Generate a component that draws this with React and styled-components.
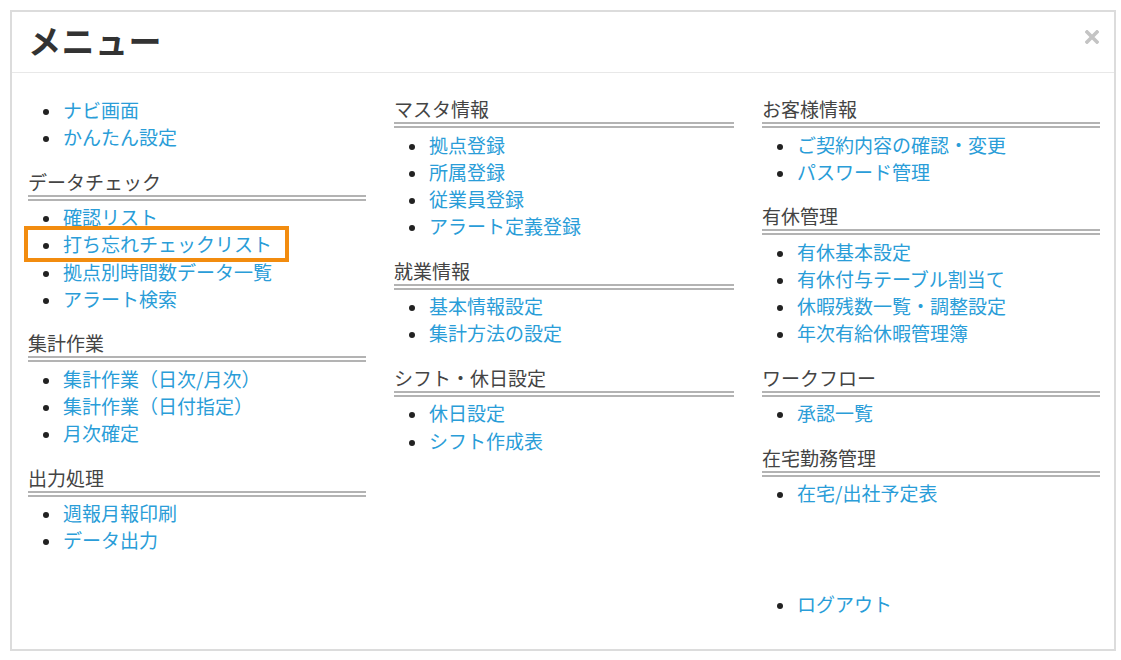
import React from "react";
import styled, { createGlobalStyle } from "styled-components";

const Global = createGlobalStyle`
  html, body { margin: 0; padding: 0; background: #ffffff; }
  body { font-family: "Noto Sans CJK JP", "Noto Sans", sans-serif; }
  *, *::before, *::after { box-sizing: border-box; }
`;

const Page = styled.div`
  padding: 10px 5px 0 10px;
  width: 1121px;
  height: 660px;
`;

const Modal = styled.div`
  width: 1106px;
  height: 641px;
  border: 2px solid #dcdcdc;
  background: #fff;
  display: flex;
  flex-direction: column;
`;

const Header = styled.div`
  display: flex;
  justify-content: space-between;
  align-items: flex-start;
  padding: 8px 15px 12px 16px;
  border-bottom: 1px solid #e8e8e8;
`;

const Title = styled.h1`
  margin: 0;
  font-size: 33px;
  line-height: 40px;
  font-weight: 700;
  color: #333;
  letter-spacing: 0.5px;
`;

const Close = styled.button`
  border: 0;
  background: none;
  padding: 0;
  margin-top: 10px;
  width: 14px;
  height: 14px;
  display: flex;
  cursor: pointer;
`;

const Body = styled.div`
  display: grid;
  grid-template-columns: 338px 340px 338px;
  column-gap: 28px;
  padding: 23px 14px 0 16px;
  align-items: start;
`;

const Column = styled.div`
  display: flex;
  flex-direction: column;
  gap: 18px;
`;

const Section = styled.section`
  display: flex;
  flex-direction: column;
  margin-top: ${(p) => p.$offset || 0}px;
`;

const Heading = styled.h2`
  margin: 0;
  font-size: 19px;
  line-height: 26px;
  font-weight: 400;
  color: #444;
  border-bottom: 6px double #b3b3b3;
`;

const List = styled.ul`
  list-style: none;
  margin: 0;
  padding: ${(p) => (p.$plain ? 0 : "2.5px")} 0 0 0;
`;

const Item = styled.li`
  position: relative;
  padding-left: 35px;
  font-size: 19px;
  line-height: 27.3px;

  &::before {
    content: "";
    position: absolute;
    left: 15px;
    top: 13px;
    width: 6px;
    height: 6px;
    border-radius: 50%;
    background: #222;
  }

  ${(p) =>
    p.$highlight &&
    `
    &::after {
      content: "";
      position: absolute;
      left: -4px;
      top: -4.5px;
      width: 265px;
      height: 36px;
      border: 4px solid #f28c0f;
      pointer-events: none;
    }
  `}
`;

const Link = styled.a`
  color: #2a9dd8;
  text-decoration: none;
`;

const columns = [
  [
    { items: ["ナビ画面", "かんたん設定"] },
    { title: "データチェック", items: ["確認リスト", "打ち忘れチェックリスト", "拠点別時間数データ一覧", "アラート検索"], highlight: 1 },
    { title: "集計作業", items: ["集計作業（日次/月次）", "集計作業（日付指定）", "月次確定"] },
    { title: "出力処理", items: ["週報月報印刷", "データ出力"] },
  ],
  [
    { title: "マスタ情報", items: ["拠点登録", "所属登録", "従業員登録", "アラート定義登録"] },
    { title: "就業情報", items: ["基本情報設定", "集計方法の設定"] },
    { title: "シフト・休日設定", items: ["休日設定", "シフト作成表"] },
  ],
  [
    { title: "お客様情報", items: ["ご契約内容の確認・変更", "パスワード管理"] },
    { title: "有休管理", items: ["有休基本設定", "有休付与テーブル割当て", "休暇残数一覧・調整設定", "年次有給休暇管理簿"] },
    { title: "ワークフロー", items: ["承認一覧"] },
    { title: "在宅勤務管理", items: ["在宅/出社予定表"] },
    { items: ["ログアウト"], offset: 66 },
  ],
];

export default function App() {
  return (
    <Page>
      <Global />
      <Modal>
        <Header>
          <Title>メニュー</Title>
          <Close aria-label="close">
            <svg width="14" height="14" viewBox="0 0 14 14">
              <path d="M2 2 L12 12 M12 2 L2 12" stroke="#c4c4c4" strokeWidth="3.6" strokeLinecap="square" />
            </svg>
          </Close>
        </Header>
        <Body>
          {columns.map((col, ci) => (
            <Column key={ci}>
              {col.map((sec, si) => (
                <Section key={si} $offset={sec.offset}>
                  {sec.title && <Heading>{sec.title}</Heading>}
                  <List $plain={!sec.title}>
                    {sec.items.map((it, ii) => (
                      <Item key={ii} $highlight={sec.highlight === ii}>
                        <Link href="#">{it}</Link>
                      </Item>
                    ))}
                  </List>
                </Section>
              ))}
            </Column>
          ))}
        </Body>
      </Modal>
    </Page>
  );
}
